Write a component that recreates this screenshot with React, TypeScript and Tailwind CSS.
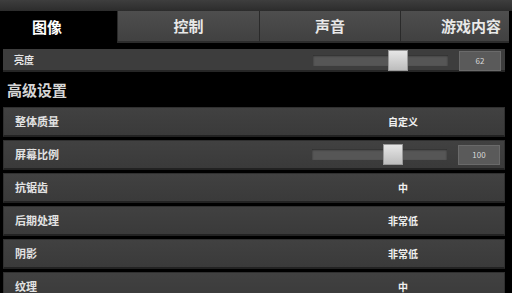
import React from 'react';

const tabs = [
  { label: '图像', width: 'w-[117px]', active: true, pad: 'justify-start pl-[32px]' },
  { label: '控制', width: 'w-[142px]', active: false, pad: 'justify-center' },
  { label: '声音', width: 'w-[141px]', active: false, pad: 'justify-center' },
  { label: '游戏内容', width: 'w-[109px]', active: false, pad: 'justify-start pl-[40px]' },
];

interface Row {
  label: string;
  value?: string;
  slider?: { pos: number; num: string };
}

const rows: Row[] = [
  { label: '整体质量', value: '自定义' },
  { label: '屏幕比例', slider: { pos: 71, num: '100' } },
  { label: '抗锯齿', value: '中' },
  { label: '后期处理', value: '非常低' },
  { label: '阴影', value: '非常低' },
  { label: '纹理', value: '中' },
];

const Slider = ({ pos, num }: { pos: number; num: string }) => (
  <div className="flex items-center pr-[4px]">
    <div className="relative w-[135px] h-[11px] bg-[#565656] shadow-[inset_0_1px_2px_rgba(0,0,0,0.5)]">
      <div
        className="absolute top-[-5px] w-[20px] h-[21px] bg-gradient-to-b from-[#e6e6e6] to-[#bdbdbd] border border-[#9a9a9a]"
        style={{ left: pos }}
      />
    </div>
    <div className="ml-[11px] w-[42px] h-[20px] bg-[#5a5a5a] border border-[#6a6a6a] flex items-center justify-center text-[8px] text-[#d8d8d8]">
      {num}
    </div>
  </div>
);

const App = () => {
  return (
    <div className="w-[512px] h-[293px] bg-black overflow-hidden font-['Noto_Sans_CJK_SC',sans-serif] text-[#eeeeee]">
      {/* top band */}
      <div className="h-[11px] bg-gradient-to-b from-[#3e3e3e] to-[#2c2c2c]" />

      {/* tabs */}
      <div className="flex h-[32px]">
        {tabs.map((t) => (
          <div
            key={t.label}
            className={`${t.width} flex items-center ${t.pad} text-[15px] font-bold ${
              t.active
                ? 'bg-black text-white'
                : 'bg-gradient-to-b from-[#4e4e4e] to-[#414141] border-l border-[#2a2a2a] border-b-2 border-b-[#2c2c2c] text-[#e8e8e8]'
            }`}
          >
            {t.label}
          </div>
        ))}
      </div>

      {/* brightness row (partly scrolled) */}
      <div className="mt-[6px] ml-[3px] w-[502px] h-[23px] bg-[#3d3d3d] border-b-2 border-[#262626] flex items-center">
        <div className="flex-1 pl-[11px] text-[10px] font-bold text-[#e6e6e6]">亮度</div>
        <div className="relative top-[1px]">
          <Slider pos={75} num="62" />
        </div>
      </div>

      {/* heading */}
      <div className="h-[35px] pl-[7px] pt-[8px] text-[15px] font-bold leading-[20px] text-[#d6d6d6]">高级设置</div>

      {/* settings rows */}
      <div className="ml-[3px] w-[502px] flex flex-col gap-[3px]">
        {rows.map((r) => (
          <div
            key={r.label}
            className="h-[30px] flex items-center bg-gradient-to-b from-[#414141] to-[#3a3a3a] border border-[#303030] border-b-2 border-b-[#222222]"
          >
            <div className="flex-1 pl-[11px] text-[11px] font-bold text-[#e2e2e2]">{r.label}</div>
            {r.slider ? (
              <Slider pos={r.slider.pos} num={r.slider.num} />
            ) : (
              <>
                <div className="w-[86px] text-center text-[10px] font-bold text-[#f0f0f0]">{r.value}</div>
                <div className="w-[58px]" />
              </>
            )}
          </div>
        ))}
      </div>
    </div>
  );
};

export default App;
